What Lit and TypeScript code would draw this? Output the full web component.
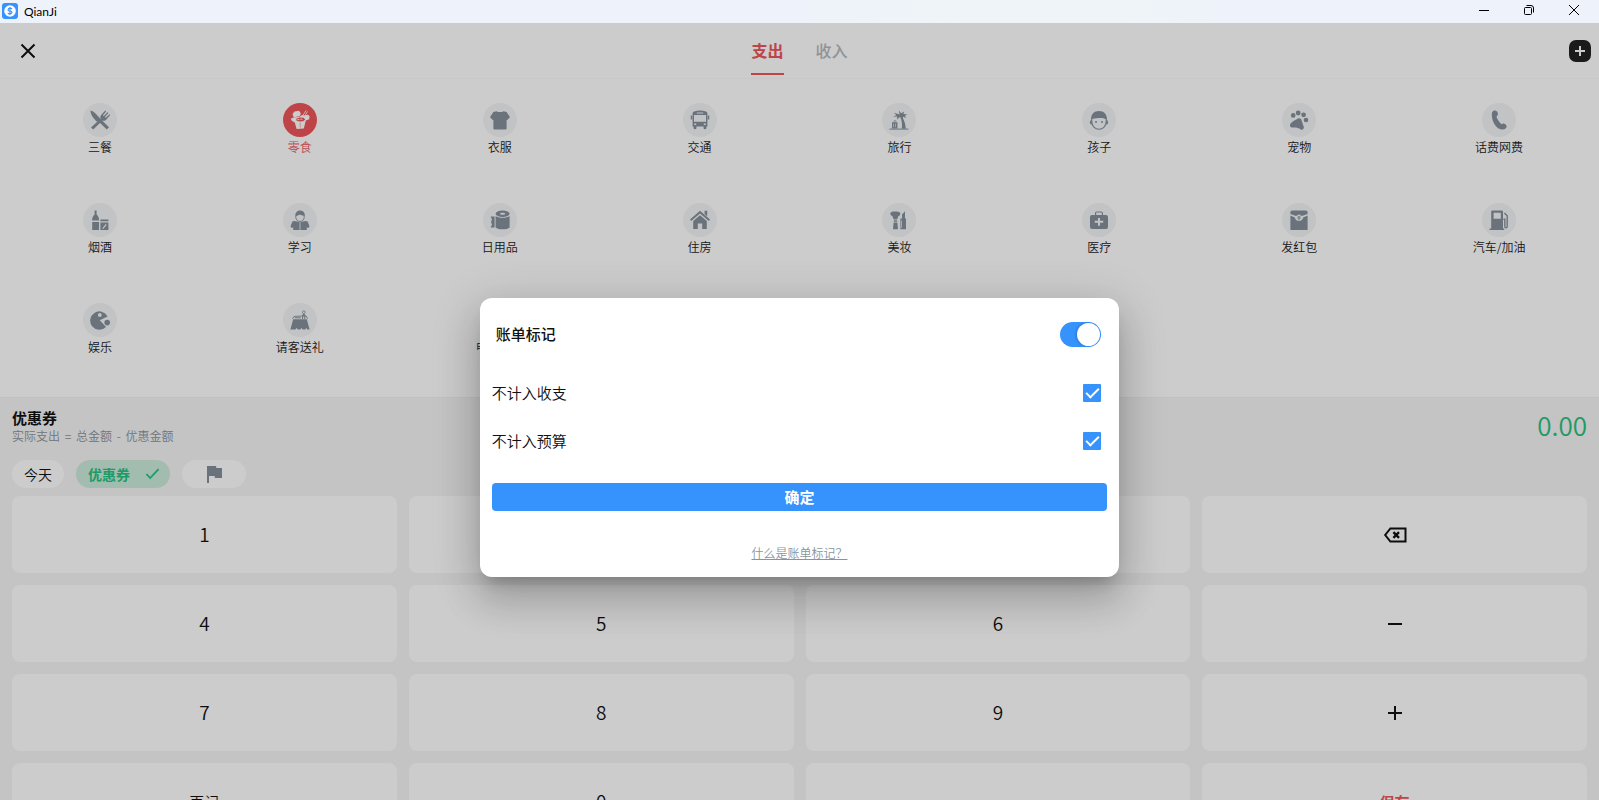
import { LitElement, html, css, svg } from "lit";
import { customElement, state } from "lit/decorators.js";

/* Category glyphs on a 20-unit grid. "cut" parts take the disc colour. */
const glyphs: Record<string, unknown> = {
  meal: svg`<path d="M.4.8C2 .4 4 1.800 6 4l4.600 5L19 17.200 16.800 19.600 8.200 11.200 6.600 11.400C3.500 8.500.6 4.600.4.8z"/><path d="M1 17.600 11 8.200 13 10 3.200 19.600z"/><path d="M10.600 8.600c-.6-1.800 0-3 1-4L15.200.6l.9.8-3.200 3.900 1 .8L17.500 2.300l.9.8-3.500 3.900 1 .8L19.400 4.200l.8.9-3.600 4.100c-1.200 1.400-2.600 2-4.200 1.300z"/>`,
  snack: svg`<path d="M2.500 4 4.500 1.400 9 .8l1.800 2.400L10 6 3.800 7.400z"/><path d="M12.400 6.200 16.200.4M14.600 6.400 17.400 1.600" fill="none" stroke="currentColor" stroke-width=".8"/><path d="M.8 8.800 3.400 7.400 9 7l3.200-2 2.400.4 3.400-.6 1.600 1.400-.4 3-3.400 1.400L13.800 18.600 6.600 19 4.800 12.600 2 11z"/><path class="cut" d="M6.200 8.800 9.800 7.600l3.800.2 1.600 1.600-2 1.800-3.600.4-3-.8z"/><path d="M7.400 9.600h2M10.400 9.200h2" fill="none" stroke="currentColor" stroke-width=".9"/><path d="M10.200 12.600v5" fill="none" stroke="#ee565a" stroke-width=".5"/>`,
  clothes: svg`<path d="M6.400 1.200c2 1.200 5.200 1.200 7.200 0L16.600 2 20 7.200l-3.400 3.200V18.400q0 1-1 1H4.400q-1 0-1-1V10.400L0 7.200 3.400 2z"/>`,
  bus: svg`<path fill-rule="evenodd" d="M4 1.400C7.600.3 12.400.3 16 1.400q1.400.6 1.400 2V16.600h-1V18.200q0 1-1.400 1t-1.400-1V16.600H6.400V18.200q0 1-1.400 1t-1.400-1V16.600h-1V3.400q0-1.400 1.400-2zM6.800 2.400v1.200h6.400V2.400zM4 5v6.800h12V5zM4.200 13.400v1.600h2v-1.600zM13.800 13.400v1.600h2v-1.600z"/><path d="M.8 5.600h1.400v4H.8zM17.800 5.600h1.400v4h-1.400z"/>`,
  travel: svg`<path d="M10.600 4.400 9.800.4l2.400 2.800 3-1.600-.8 2.200 4 1-2.600 1 1.600 2.200-3.400-1.200-.4 3-2.400-3-3.200 2.800.2-3.200L4 6.800l3.200-1.600-2-2.400z"/><path d="M11 6.400h2c2.400 4 3.600 8 3.800 12.400h-4c.6-4.800 0-8.800-1.800-12.400z"/><path d="M.4 18.600h19v1H.4z"/><path fill-rule="evenodd" d="M4.800 10.400h2.400v1.800h1.200v6.200H3v-6.200h1.800zm.6.6v1.200h1.200V11zM4.400 13.400v3.800h.6v-3.800zm2 0v3.800H7v-3.800z"/>`,
  kid: svg`<path d="M2 9.400C2 4.400 5 1 10 1s8 3.400 8 8.400C15.600 8.200 13 7.600 9.400 8 6.800 8.200 4 8.400 2 9.400z"/><path d="M2.800 8.600v3c0 4.600 3.200 7.600 7.200 7.600s7.200-3 7.200-7.600v-3" fill="none" stroke="currentColor" stroke-width="1.100"/><circle cx="7" cy="12" r="1"/><circle cx="13" cy="12" r="1"/><path d="M2.600 10Q.6 10.200.8 12.400t2.200 2.200zM17.400 10q2 .2 1.800 2.400t-2.200 2.200z"/>`,
  pet: svg`<circle cx="4.200" cy="5.400" r="2.300"/><circle cx="9.200" cy="3" r="2.400"/><circle cx="14.600" cy="4.800" r="2.400"/><circle cx="17" cy="10" r="2.300"/><path d="M9 8.600c2-.8 3.400.4 3.800 2.400L14.800 17c.4 2-1.200 3.200-3 2.400-2.400-1.600-4.800-2-8-1.800-2.600 0-3.600-2.200-2.200-4.200C3.600 11.400 6 10.400 9 8.600z"/>`,
  phone: svg`<path d="M5.200.6C7 .2 8.400 1.400 8.800 3S8.600 5.800 7.400 6.600c1 3.200 2.800 5.800 5 7.600 1.200-1 2.800-1 4 0 1.600 1.200 1.600 3 .2 4.200-1.600 1.400-4.600 1.400-7 0C5 15.800 2.800 9.400 2.800 4.600 2.800 2.400 3.600 1 5.200.6z"/>`,
  drinks: svg`<path d="M4.600.4h2v4.200C8 6 9 7.600 9 9.600v1H2.200v-1C2.200 7.600 3.200 6 4.600 4.600zM2.200 12H9v8H2.200zM10.400 9.400h8v1.800h-8zM10.400 12.400h8V20h-8z"/><path class="cut" d="M12.400 18.200 15.800 14 16.600 15 13.200 18.900z"/>`,
  study: svg`<path d="M5.400 6.400C5 3 7 .6 10 .6s5.200 2.200 4.800 5.400C12.600 5.800 10.800 5.200 9.600 4.600 8.600 5.400 7.200 6 5.400 6.400z"/><path d="M5.800 6v1.400C6 10 7.800 11.400 10 11.400s4-1.400 4.200-4V6" fill="none" stroke="currentColor" stroke-width=".9"/><path d="M2.400 11.600 4.400 11l5.200 1v8H3.200v-3.400L.8 15.600zM17.600 11.600 15.600 11l-5.200 1v8h6.400v-3.400l2.400-1z"/><circle cx="2.200" cy="16.200" r="1.500"/><circle cx="17.800" cy="16.200" r="1.500"/>`,
  daily: svg`<path d="M.6 6.400h4v11H.6l1.400-3-1-2.400 1-2.600z"/><ellipse cx="12.600" cy="3.800" rx="7" ry="3.200"/><path d="M5.600 6c2.600 2.400 11.400 2.400 14 0v11.400c-2.600 2.600-11.400 2.600-14 0z"/><ellipse class="cut" cx="12.600" cy="3.800" rx="2.600" ry="1"/>`,
  home: svg`<path d="M10 .8 20 9.600l-1.200 1.400L10 3.400 1.200 11 0 9.600zM14.600.8h2.600v5.400l-2.600-2.200z"/><path d="M10 5.200 16.800 11v8h-4.600v-5.400H7.800V19H3.200v-8z"/>`,
  beauty: svg`<path d="M1.200 3.600C2 1.600 4 1.400 6.400 1.600c2.600-.4 4.600.4 5 2 0 1.600-1.400 2.400-2.400 3.200L7.800 9.400H5L3.800 6.800C2.600 6 1.400 5 1.200 3.600z"/><path d="M4.200 6.600h4.400v2H4.200zM4.800 10.200h3.400v1.600H4.800zM4.600 12.400h3.800l.6 6.800H4z"/><path d="M13 4.600 16 1.200v7.200h1v10.800h-5.600V8.400H13z"/><path class="cut" d="M12.200 10.400h.7v7.400h-.7z"/>`,
  medical: svg`<path fill-rule="evenodd" d="M6 5V3q0-1.600 1.600-1.600h4.800Q14 1.400 14 3v2h3q2 0 2 2v10q0 2-2 2H3q-2 0-2-2V7q0-2 2-2zm1.200 0h5.600V2.600H7.200zM9 8v2.800H5.800v2H9v3h2v-3h3.200v-2H11V8z"/>`,
  packet: svg`<path d="M1.400 2q0-1.600 1.600-1.600h14Q18.600.4 18.600 2v2L13 6a3.600 3.600 0 0 0-6 0L1.400 4z"/><path d="M1.400 5.600 5.800 7.600a4.300 4.300 0 0 0 8.400 0l4.400-2V20H1.400z"/><path d="M8.200 5.400 10 7.400l1.800-2M10 7.400v3M8.400 8h3.200" fill="none" stroke="currentColor" stroke-width=".9"/>`,
  fuel: svg`<path fill-rule="evenodd" d="M2.200 1.600Q2.200.4 3.400.4h9.400Q14 .4 14 1.600V18.600h1.200V20H.6v-1.400h1.600zM4.600 2.800v6h7.200v-6z"/><path d="M15.400 3 18.200 5.800V16.200q0 1.600-1.200 1.600t-1.200-1.600v-7H14.400" fill="none" stroke="currentColor" stroke-width="1.400"/>`,
  fun: svg`<path d="M17.600 6.400A9.200 9.200 0 1 0 16 17L9.800 10.200z"/><circle class="cut" cx="9.800" cy="5" r="1.900"/><circle cx="17.200" cy="12.600" r="2.800"/>`,
  treat: svg`<path d="M3.200 9.200h13.600l2.800 10.400h-2.200l-1-1.600-1.200 1.600h-2.600L11.400 18l-1.200 1.600H8L6.600 18l-1.200 1.600H.4z"/><path d="M2.600 8.800 4 6.400 16 5.800l1.600 3" fill="none" stroke="currentColor" stroke-width=".9"/><path d="M4.800 7.800h6M12.600 9V5M14.800 9V5" fill="none" stroke="currentColor" stroke-width="1.100"/><circle cx="13.800" cy="2.200" r="1.400" fill="none" stroke="currentColor" stroke-width=".8"/><circle cx="13.800" cy="4.800" r="1.100"/>`,
  device: svg`<path d="M3 3h14v10H3zM8 14h4v2H8zM5 16h10v2H5z"/>`,
};

const categories: [string, string][] = [
  ["meal", "三餐"], ["snack", "零食"], ["clothes", "衣服"], ["bus", "交通"],
  ["travel", "旅行"], ["kid", "孩子"], ["pet", "宠物"], ["phone", "话费网费"],
  ["drinks", "烟酒"], ["study", "学习"], ["daily", "日用品"], ["home", "住房"],
  ["beauty", "美妆"], ["medical", "医疗"], ["packet", "发红包"], ["fuel", "汽车/加油"],
  ["fun", "娱乐"], ["treat", "请客送礼"], ["device", "电器数码"],
];

const fontStack = css`"Noto Sans CJK SC", "Noto Sans", sans-serif`;

const base = css`
  * { box-sizing: border-box; }
  button {
    font: inherit;
    color: inherit;
    background: none;
    border: 0;
    margin: 0;
    padding: 0;
  }
  svg { display: block; }
`;

@customElement("title-bar")
class TitleBar extends LitElement {
  static styles = [base, css`
    :host {
      display: flex;
      align-items: flex-start;
      flex: none;
      height: 23px;
      padding: 0 3px 0 2px;
      background: linear-gradient(90deg, #eef3fb 50%, #eef4f8 60%, #eef4f8 70%, #eef3fb 76%);
      color: #000;
    }
    .logo { margin-top: 3px; }
    .name { flex: 1; padding-left: 6px; font: 12px/23px Lato, sans-serif; }
    .controls { display: flex; }
    .controls button {
      display: grid;
      place-items: center;
      width: 45px;
      height: 20px;
    }
  `];
  render() {
    return html`
      <svg class="logo" width="16" height="16" viewBox="0 0 16 16">
        <rect width="16" height="16" rx="3" fill="#3692fc"/>
        <circle cx="8" cy="8" r="5.800" fill="#fff"/>
        <path d="M10 6.200Q9.700 5.100 8 5.100T6.100 6.500 8 8t1.900 1.400T8 10.900 6 9.800M8 4v8" fill="none" stroke="#3692fc" stroke-width="1.100"/>
      </svg>
      <span class="name">QianJi</span>
      <div class="controls">
        <button aria-label="最小化"><svg width="10" height="10" viewBox="0 0 10 10"><path d="M0 5.500h10" stroke="#000"/></svg></button>
        <button aria-label="还原"><svg width="10" height="10" viewBox="0 0 10 10" fill="none" stroke="#000"><rect x=".5" y="2.500" width="7" height="7" rx="1"/><path d="M2.500.5H7Q9.500.5 9.500 3v4.500"/></svg></button>
        <button aria-label="关闭"><svg width="10" height="10" viewBox="0 0 10 10"><path d="M0 0 10 10M10 0 0 10" stroke="#000"/></svg></button>
      </div>`;
  }
}

@customElement("category-grid")
class CategoryGrid extends LitElement {
  @state() selected = "snack";
  static styles = [base, css`
    :host {
      display: grid;
      grid-template-columns: repeat(8, 1fr);
      grid-auto-rows: 100px;
      padding: 18px 0 0;
    }
    .item {
      display: flex;
      flex-direction: column;
      align-items: center;
      padding-top: 6px;
      font-size: 12px;
      line-height: 20px;
      color: #222;
    }
    .disc {
      display: grid;
      place-items: center;
      width: 34px;
      height: 34px;
      border-radius: 50%;
      background: #f2f4f6;
      color: #85909b;
    }
    .disc svg { fill: currentColor; }
    .cut { fill: #f2f4f6; }
    .on { color: #ee5a5f; }
    .on .disc { background: #ee565a; color: #fff; }
    .on .cut { fill: #ee565a; }
  `];
  render() {
    return categories.map(([id, label]) => html`
      <button class="item ${id === this.selected ? "on" : ""}" @click=${() => (this.selected = id)}>
        <span class="disc"><svg width="20" height="20" viewBox="0 0 20 20">${glyphs[id]}</svg></span>
        <span>${label}</span>
      </button>`);
  }
}

@customElement("key-pad")
class KeyPad extends LitElement {
  static styles = [base, css`
    :host {
      display: grid;
      grid-template-columns: repeat(4, 1fr);
      grid-auto-rows: 77px;
      gap: 12px;
    }
    button {
      display: grid;
      place-items: center;
      border-radius: 8px;
      background: #fff;
      color: #111;
      font-size: 19px;
      line-height: 28px;
    }
    .digit { padding-bottom: 2px; }
    .word { font-size: 15px; line-height: 22px; }
    .save { color: #ee565a; font-weight: 700; }
  `];
  render() {
    const digit = (d: string) => html`<button class="digit">${d}</button>`;
    return html`
      ${["1", "2", "3"].map(digit)}
      <button aria-label="退格"><svg width="24" height="24" viewBox="0 0 24 24" fill="none" stroke="currentColor" stroke-width="2"><path d="M7.400 5.500H22.500V18.500H7.400L2.200 12z"/><path d="M10.400 9.200 16 14.800M16 9.200 10.400 14.800" stroke-width="2.400"/></svg></button>
      ${["4", "5", "6"].map(digit)}
      <button aria-label="减"><svg width="24" height="24" viewBox="0 0 24 24"><path d="M5 12h14" stroke="currentColor" stroke-width="2"/></svg></button>
      ${["7", "8", "9"].map(digit)}
      <button aria-label="加"><svg width="24" height="24" viewBox="0 0 24 24"><path d="M5 12h14M12 5v14" stroke="currentColor" stroke-width="2"/></svg></button>
      <button class="word">再记</button>
      ${["0", "."].map(digit)}
      <button class="word save">保存</button>`;
  }
}

@customElement("mark-dialog")
class MarkDialog extends LitElement {
  static styles = [base, css`
    :host {
      display: block;
      width: 40%;
      min-width: 320px;
      border-radius: 12px;
      background: #fff;
      box-shadow: 0 11px 15px -7px rgba(0, 0, 0, .2), 0 24px 38px 3px rgba(0, 0, 0, .14), 0 9px 46px 8px rgba(0, 0, 0, .12);
      color: #111;
      font-size: 15px;
      line-height: 24px;
      padding: 12px;
    }
    .row {
      display: flex;
      align-items: center;
      justify-content: space-between;
      height: 48px;
      padding-right: 6px;
    }
    .head { padding-left: 4px; margin-bottom: 11px; font-weight: 500; }
    input { appearance: none; margin: 0; flex: none; }
    .switch {
      display: flex;
      width: 41px;
      height: 25px;
      padding: 1px;
      border-radius: 13px;
      background: #3692fc;
      justify-content: flex-end;
    }
    .switch::before {
      content: "";
      width: 23px;
      height: 23px;
      border-radius: 50%;
      background: #fff;
      box-shadow: -1px 0 3px rgba(0, 0, 0, .2);
    }
    .switch:not(:checked) { background: #ccc; justify-content: flex-start; }
    .box { width: 18px; height: 18px; border: 2px solid #888; border-radius: 1px; display: grid; place-items: center; }
    .box:checked { border: 0; background: #3692fc; }
    .box:checked::before {
      content: "";
      box-sizing: border-box;
      width: 13px;
      height: 7px;
      margin-bottom: 4px;
      border: solid #fff;
      border-width: 0 0 2px 2px;
      transform: rotate(-45deg);
    }
    .ok {
      display: block;
      width: 100%;
      height: 28px;
      margin-top: 18px;
      border-radius: 4px;
      background: #3692fc;
      color: #fff;
      font-weight: 700;
    }
    .help {
      display: flex;
      justify-content: center;
      padding: 32px 0 2px;
      font-size: 12px;
      line-height: 20px;
    }
    a { color: #8b949e; }
  `];
  render() {
    return html`
      <label class="row head">账单标记<input class="switch" type="checkbox" role="switch" checked></label>
      <label class="row">不计入收支<input class="box" type="checkbox" checked></label>
      <label class="row">不计入预算<input class="box" type="checkbox" checked></label>
      <button class="ok">确定</button>
      <div class="help"><a href="#help">什么是账单标记？</a></div>`;
  }
}

@customElement("app-root")
class AppRoot extends LitElement {
  static styles = [base, css`
    :host {
      display: flex;
      flex-direction: column;
      height: 100vh;
      overflow: hidden;
      font-family: ${fontStack};
      font-weight: 350;
      color: #111;
    }
    .page {
      position: relative;
      display: flex;
      flex-direction: column;
      flex: 1;
      min-height: 0;
      overflow: hidden;
      background: #fff;
    }
    .header {
      display: grid;
      grid-template-columns: 1fr auto 1fr;
      align-items: center;
      flex: none;
      height: 56px;
      padding: 0 8px;
      border-bottom: 1px solid #f9f9f9;
    }
    .close { display: flex; padding-left: 8px; }
    .tabs { display: flex; align-self: start; gap: 32px; }
    .tabs button {
      height: 52px;
      padding-top: 3px;
      border-bottom: 2px solid transparent;
      font-size: 16px;
      line-height: 24px;
      font-weight: 500;
      color: #b5b9be;
    }
    .tabs .on { color: #ee565a; border-color: #ee565a; font-weight: 700; }
    .add { justify-self: end; }
    category-grid { flex: none; }
    .entry {
      display: flex;
      flex-direction: column;
      flex: none;
      padding: 8px 12px 12px;
      border-top: 1px solid #f1f1f1;
      background: #f5f5f5;
    }
    .summary { display: flex; justify-content: space-between; align-items: flex-start; }
    .title { margin: 0; font-size: 15px; line-height: 24px; font-weight: 700; }
    .note { margin: 0; font-size: 12px; line-height: 12px; color: #8b949e; }
    .op { margin: 0 2px; }
    .amount { font-size: 26px; line-height: 38px; color: #26c281; }
    .chips { display: flex; gap: 12px; padding: 16px 0 8px; }
    .chips button {
      display: flex;
      align-items: center;
      height: 28px;
      padding: 0 12px;
      border-radius: 14px;
      background: #fff;
      font-size: 14px;
      line-height: 20px;
    }
    .chips .coupon { gap: 15px; padding-right: 10px; background: #cbebdd; color: #26c281; font-weight: 700; }
    .chips .flag { padding: 0 20px; color: #85909b; }
    .shade {
      position: absolute;
      inset: 0;
      display: grid;
      place-items: center;
      padding-top: 52px;
      background: rgba(0, 0, 0, .2);
    }
  `];
  render() {
    return html`
      <title-bar></title-bar>
      <main class="page">
        <header class="header">
          <div class="close"><button aria-label="关闭记账"><svg width="24" height="24" viewBox="0 0 24 24"><path d="M5.500 5.500 18.500 18.500M18.500 5.500 5.500 18.500" stroke="#111" stroke-width="2"/></svg></button></div>
          <nav class="tabs"><button class="on">支出</button><button>收入</button></nav>
          <button class="add" aria-label="添加"><svg width="22" height="22" viewBox="0 0 22 22"><rect width="22" height="22" rx="7" fill="#222"/><path d="M6 11h10M11 6v10" stroke="#fff" stroke-width="2"/></svg></button>
        </header>
        <category-grid></category-grid>
        <section class="entry">
          <div class="summary">
            <div>
              <h2 class="title">优惠券</h2>
              <p class="note">实际支出 <span class="op">=</span> 总金额 <span class="op">-</span> 优惠金额</p>
            </div>
            <output class="amount">0.00</output>
          </div>
          <div class="chips">
            <button>今天</button>
            <button class="coupon">优惠券<svg width="15" height="12" viewBox="0 0 15 12"><path d="M1.400 6 5.200 10 13.600 1.200" fill="none" stroke="currentColor" stroke-width="1.800"/></svg></button>
            <button class="flag" aria-label="标记"><svg width="24" height="24" viewBox="0 0 24 24"><path d="M14.400 6 14 4H5v17h2v-7h5.600l.4 2h7V6z" fill="currentColor"/></svg></button>
          </div>
          <key-pad></key-pad>
        </section>
        <div class="shade"><mark-dialog role="dialog" aria-label="账单标记"></mark-dialog></div>
      </main>`;
  }
}
